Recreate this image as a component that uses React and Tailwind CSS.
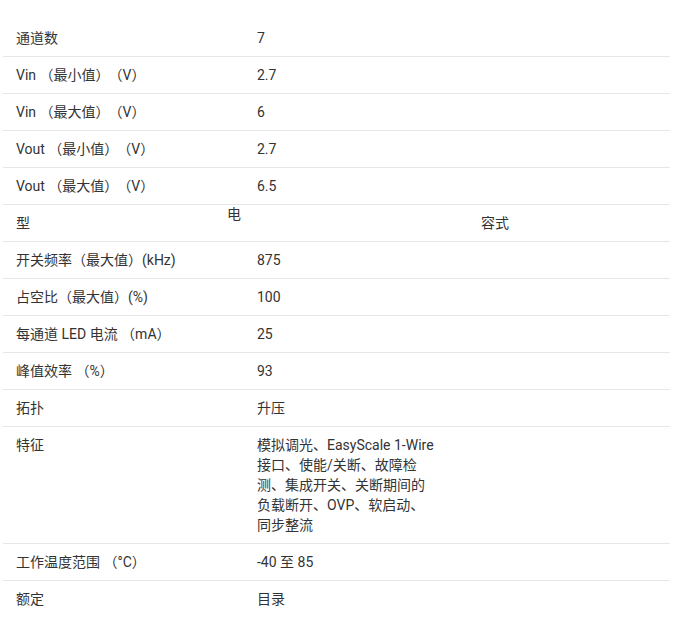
import React from "react";

const gapV = (a) => (
  <>
    {a}
    <span className="ml-[6px]">（V）</span>
  </>
);

const rows = [
  ["通道数", "7"],
  [gapV("Vin （最小值）"), "2.7"],
  [gapV("Vin （最大值）"), "6"],
  [gapV("Vout （最小值）"), "2.7"],
  [gapV("Vout （最大值）"), "6.5"],
  null,
  ["开关频率（最大值）(kHz)", "875"],
  ["占空比（最大值）(%)", "100"],
  ["每通道 LED 电流 （mA）", "25"],
  ["峰值效率 （%）", "93"],
  ["拓扑", "升压"],
  ["特征", "模拟调光、EasyScale 1-Wire 接口、使能/关断、故障检测、集成开关、关断期间的负载断开、OVP、软启动、同步整流"],
  ["工作温度范围 （°C）", "-40 至 85"],
  ["额定", "目录"],
];

export default function App() {
  return (
    <div
      className="bg-white min-h-[617px] pt-[20px] pl-[3px] text-[#333333] text-[14px] leading-5"
      style={{ fontFamily: 'Roboto, "Noto Sans CJK SC", sans-serif' }}
    >
      <div className="w-[667px]">
        {rows.map((r, i) => {
          const last = i === rows.length - 1;
          const cls =
            "flex py-2 " + (last ? "" : "border-b border-[#e6e6e6]");
          if (r === null) {
            return (
              <div key={i} className={cls}>
                <div className="w-[224px] pl-[13px] flex">
                  <span>型</span>
                </div>
                <span className="relative -top-[9px]">电</span>
                <span className="ml-[240px]">容式</span>
              </div>
            );
          }
          return (
            <div key={i} className={cls}>
              <div className="w-[254px] shrink-0 pl-[13px]">{r[0]}</div>
              <div className="w-[178px]">{r[1]}</div>
            </div>
          );
        })}
      </div>
    </div>
  );
}
